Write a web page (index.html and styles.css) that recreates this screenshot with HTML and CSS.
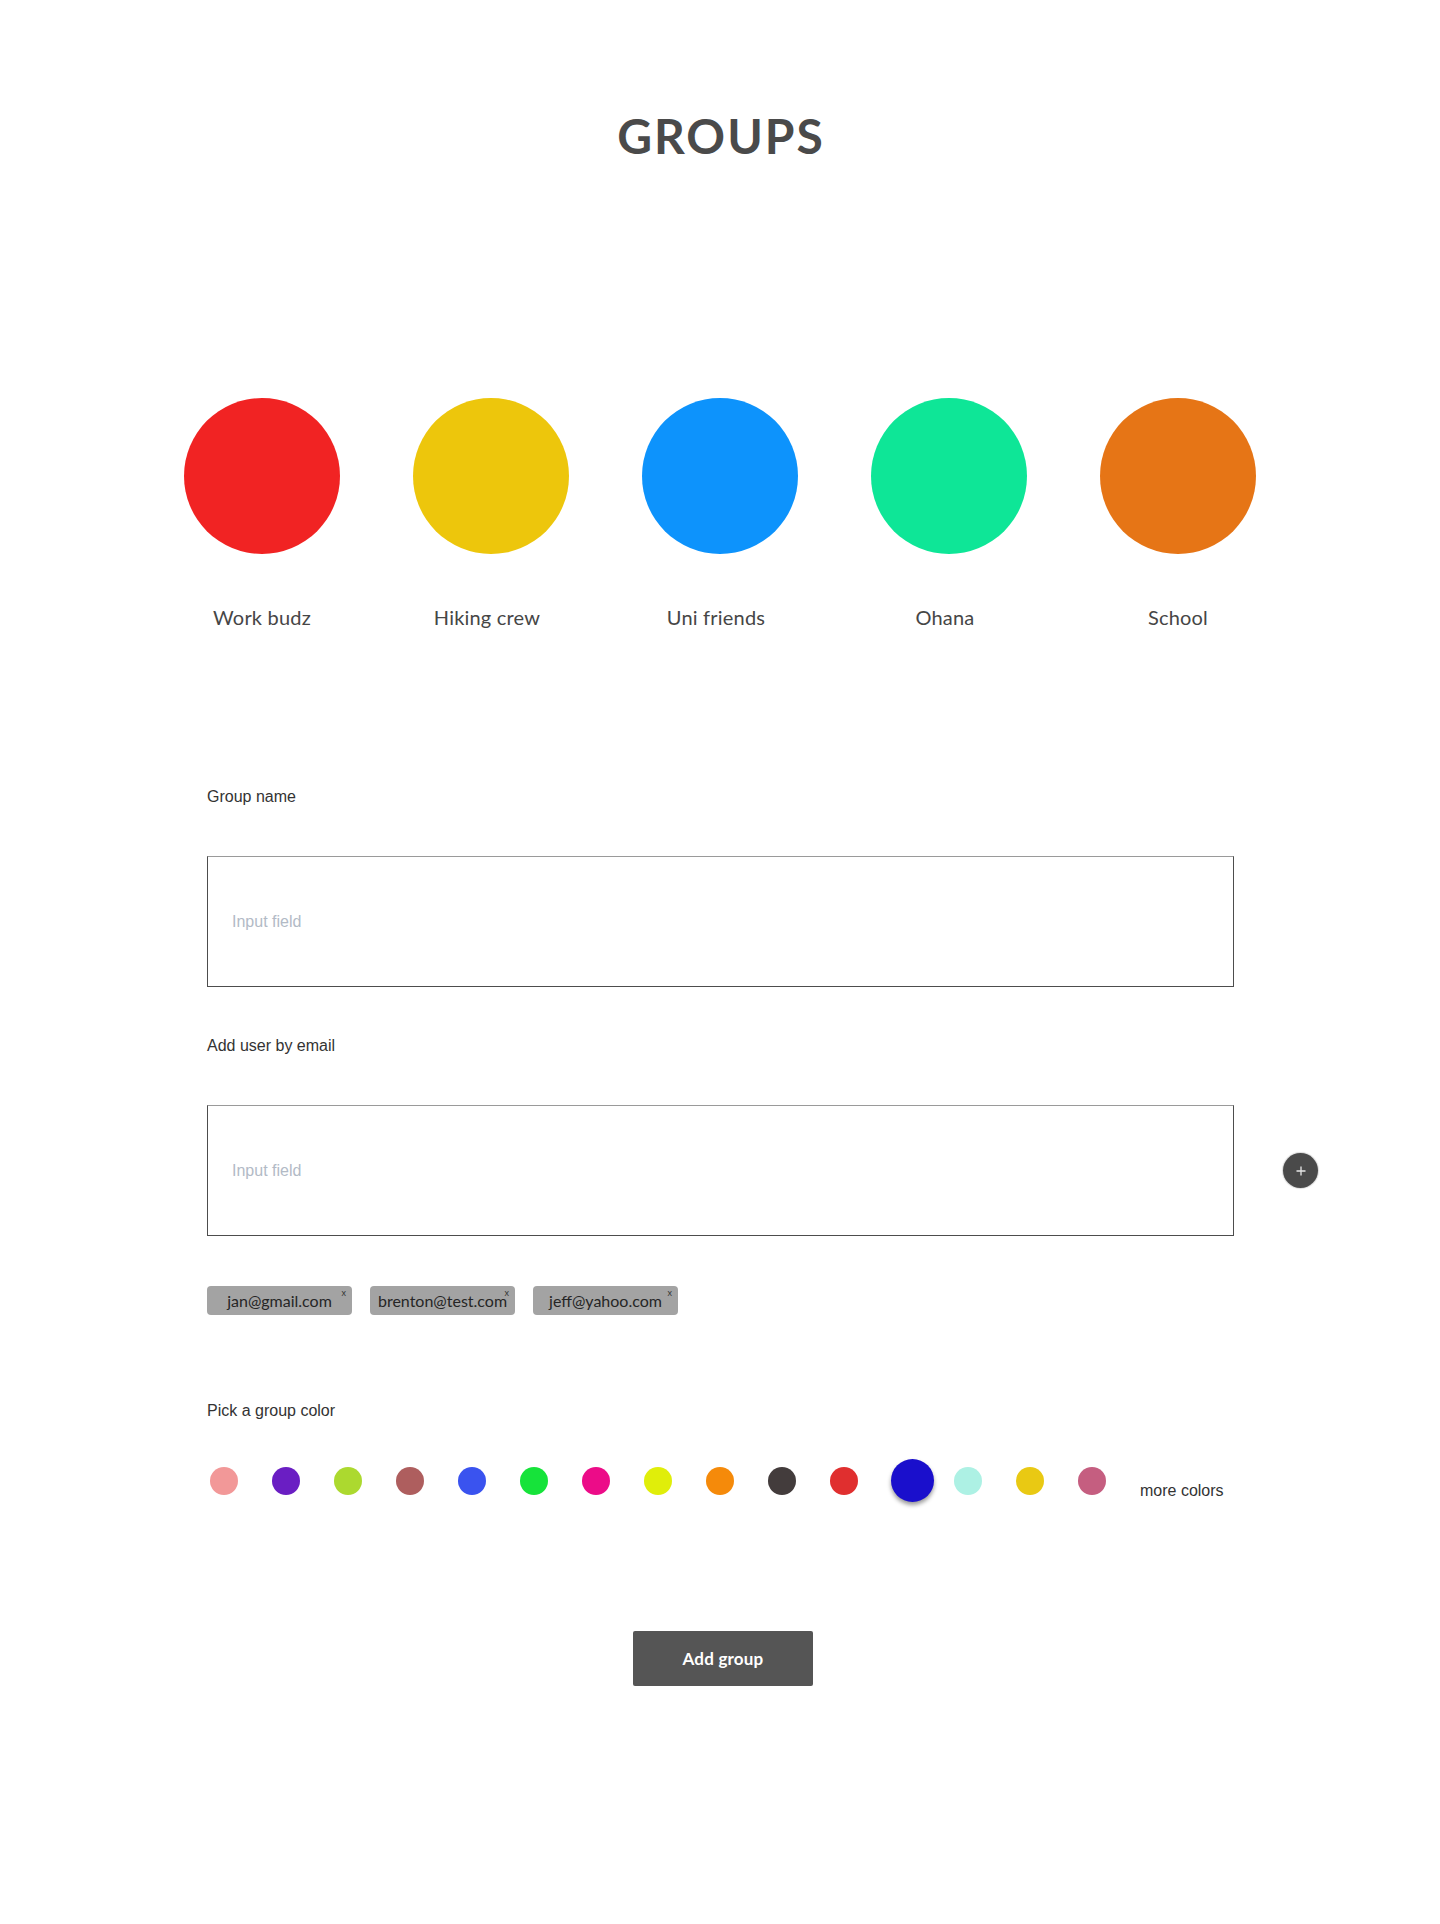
FILE: index.html
```html
<!DOCTYPE html>
<html lang="en">
<head>
<meta charset="utf-8">
<title>Groups</title>
<link rel="stylesheet" href="styles.css">
</head>
<body>
<main class="page">
  <h1 class="title">GROUPS</h1>

  <section class="groups">
    <div class="group">
      <div class="group-circle c-red"></div>
      <div class="group-label">Work budz</div>
    </div>
    <div class="group">
      <div class="group-circle c-yellow"></div>
      <div class="group-label shift">Hiking crew</div>
    </div>
    <div class="group">
      <div class="group-circle c-blue"></div>
      <div class="group-label shift">Uni friends</div>
    </div>
    <div class="group">
      <div class="group-circle c-green"></div>
      <div class="group-label shift">Ohana</div>
    </div>
    <div class="group">
      <div class="group-circle c-orange"></div>
      <div class="group-label">School</div>
    </div>
  </section>

  <form class="form">
    <label class="field-label" for="gname">Group name</label>
    <input class="field-input first" id="gname" type="text" placeholder="Input field">

    <label class="field-label label-gap" for="gemail">Add user by email</label>
    <div class="input-row">
      <input class="field-input" id="gemail" type="text" placeholder="Input field">
      <button class="plus-btn" type="button" aria-label="Add user">
        <svg width="12" height="12" viewBox="0 0 12 12"><path d="M6 1.5v9M1.5 6h9" stroke="#e6e6e6" stroke-width="1.3" fill="none"/></svg>
      </button>
    </div>

    <div class="chips">
      <span class="chip">jan@gmail.com<span class="chip-x">x</span></span>
      <span class="chip">brenton@test.com<span class="chip-x">x</span></span>
      <span class="chip">jeff@yahoo.com<span class="chip-x">x</span></span>
    </div>

    <div class="field-label pick-label">Pick a group color</div>
    <div class="swatches">
      <span class="dot" style="background:#f29898"></span>
      <span class="dot" style="background:#6a1ec3"></span>
      <span class="dot" style="background:#acd92f"></span>
      <span class="dot" style="background:#ae5e5e"></span>
      <span class="dot" style="background:#3a53ef"></span>
      <span class="dot" style="background:#16e33a"></span>
      <span class="dot" style="background:#ec0c88"></span>
      <span class="dot" style="background:#e0ee0a"></span>
      <span class="dot" style="background:#f58a0a"></span>
      <span class="dot" style="background:#433c3c"></span>
      <span class="dot" style="background:#e02f2f"></span>
      <span class="dot selected" style="background:#1a0fcc"></span>
      <span class="dot" style="background:#adf1e4"></span>
      <span class="dot" style="background:#e9c913"></span>
      <span class="dot" style="background:#c55e80"></span>
      <span class="more-colors">more colors</span>
    </div>

    <div class="actions">
      <button class="add-btn" type="button">Add group</button>
    </div>
  </form>
</main>
</body>
</html>
```

FILE: styles.css
```css
* { box-sizing: border-box; }

html, body {
  margin: 0;
  padding: 0;
  background: #ffffff;
}

body {
  font-family: "Liberation Sans", Arial, sans-serif;
  color: #333333;
}

.page {
  width: 1440px;
  min-height: 1924px;
  padding-top: 106px;
}

.title {
  margin: 0;
  padding-left: 2px;
  font-family: Lato, "Open Sans", sans-serif;
  font-weight: 700;
  font-size: 48px;
  line-height: 60px;
  letter-spacing: 2px;
  text-align: center;
  color: #4a4a4a;
}

.groups {
  margin-top: 232px;
  display: flex;
  justify-content: center;
  gap: 73px;
}

.group {
  width: 156px;
  display: flex;
  flex-direction: column;
  align-items: center;
}

.group-circle {
  width: 156px;
  height: 156px;
  border-radius: 50%;
}

.c-red { background: #f12323; }
.c-yellow { background: #edc60c; }
.c-blue { background: #0d93fc; }
.c-green { background: #0ee697; }
.c-orange { background: #e67516; }

.group-label {
  margin-top: 51px;
  font-family: Lato, "Open Sans", sans-serif;
  font-size: 20px;
  line-height: 24px;
  letter-spacing: 0.2px;
  color: #464646;
  white-space: nowrap;
}

.group-label.shift {
  padding-right: 8px;
}

.form {
  margin-top: 158px;
  margin-left: 207px;
  width: 1100px;
  display: flex;
  flex-direction: column;
  align-items: flex-start;
}

.field-label {
  display: block;
  font-size: 16px;
  line-height: 20px;
  color: #333333;
}

.label-gap { margin-top: 49px; }

.field-input {
  display: block;
  width: 1027px;
  height: 131px;
  margin: 0;
  padding: 0 0 0 24px;
  border: 1px solid #4d4d4d;
  border-top-color: #9a9a9a;
  border-radius: 0;
  background: #ffffff;
  font-family: "Liberation Sans", Arial, sans-serif;
  font-size: 16px;
  color: #333333;
  outline: none;
}

.field-input.first { margin-top: 49px; }

.field-input::placeholder {
  color: #b2bac6;
}

.input-row {
  margin-top: 49px;
  display: flex;
  align-items: center;
}

.plus-btn {
  margin-left: 49px;
  width: 35px;
  height: 35px;
  padding: 0;
  border: none;
  border-radius: 50%;
  background: #4a4a4a;
  box-shadow: 0 0 1px 1px rgba(0, 0, 0, 0.15);
  display: flex;
  align-items: center;
  justify-content: center;
}

.plus-btn svg { display: block; }

.chips {
  margin-top: 50px;
  display: flex;
  gap: 18px;
}

.chip {
  position: relative;
  width: 145px;
  height: 29px;
  border-radius: 4px;
  background: #a3a3a3;
  display: flex;
  align-items: center;
  justify-content: center;
  font-family: Lato, "Open Sans", sans-serif;
  font-size: 16px;
  color: #262626;
  white-space: nowrap;
}

.chip-x {
  position: absolute;
  top: 2px;
  right: 6px;
  font-size: 9px;
  line-height: 9px;
  color: #333333;
}

.pick-label { margin-top: 86px; }

.swatches {
  margin-top: 38px;
  height: 43px;
  display: flex;
  align-items: center;
  gap: 34px;
  padding-left: 3px;
}

.dot {
  display: block;
  flex: none;
  width: 28px;
  height: 28px;
  border-radius: 50%;
}

.dot.selected {
  width: 43px;
  height: 43px;
  margin-left: -1px;
  margin-right: -14px;
  box-shadow: 0 3px 4px rgba(0, 0, 0, 0.4);
}

.more-colors {
  margin-top: 20px;
  font-size: 16px;
  line-height: 20px;
  color: #333333;
  white-space: nowrap;
}

.actions {
  margin-top: 129px;
  width: 1027px;
  display: flex;
  justify-content: center;
  padding-left: 5px;
}

.add-btn {
  width: 180px;
  height: 55px;
  border: none;
  border-radius: 2px;
  background: #555555;
  color: #ffffff;
  font-family: Lato, "Open Sans", sans-serif;
  font-weight: 700;
  font-size: 17px;
  letter-spacing: 0.2px;
}
```
